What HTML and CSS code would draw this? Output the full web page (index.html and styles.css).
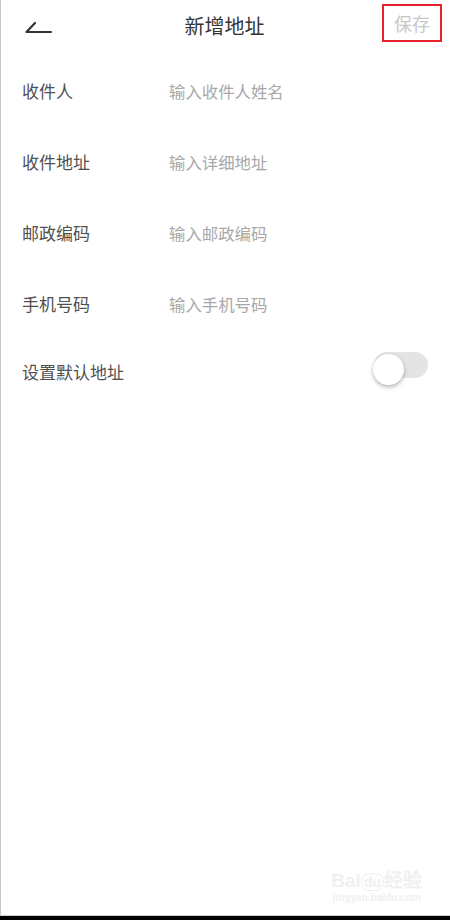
FILE: index.html
```html
<!DOCTYPE html>
<html lang="zh-CN">
<head>
<meta charset="UTF-8">
<meta name="viewport" content="width=device-width, initial-scale=1.0">
<title>新增地址</title>
<link rel="stylesheet" href="styles.css">
</head>
<body>
<div class="page">
    <header class="topbar">
        <div class="back">
            <svg width="30" height="16" viewBox="0 0 30 16">
                <path d="M12 2 L3.5 11 L28 11" fill="none" stroke="#333" stroke-width="2.2" stroke-linecap="round" stroke-linejoin="round"/>
            </svg>
        </div>
        <h1 class="title">新增地址</h1>
        <div class="save">保存</div>
    </header>

    <div class="form">
        <div class="row">
            <span class="label">收件人</span>
            <span class="input">输入收件人姓名</span>
        </div>
        <div class="row">
            <span class="label">收件地址</span>
            <span class="input">输入详细地址</span>
        </div>
        <div class="row">
            <span class="label">邮政编码</span>
            <span class="input">输入邮政编码</span>
        </div>
        <div class="row">
            <span class="label">手机号码</span>
            <span class="input">输入手机号码</span>
        </div>
        <div class="row row-switch">
            <span class="label">设置默认地址</span>
            <div class="switch">
                <div class="knob"></div>
            </div>
        </div>
    </div>

    <div class="watermark">
        <div class="wm-logo">Bai<span class="wm-du">du</span>经验</div>
        <div class="wm-url">jingyan.baidu.com</div>
    </div>
</div>
<div class="bottom-bar"></div>
</body>
</html>
```

FILE: styles.css
```css
html, body {
    margin: 0;
    padding: 0;
}

body {
    width: 450px;
    height: 920px;
    background-color: #fff;
    font-family: "Noto Sans CJK SC", "Noto Sans", sans-serif;
    display: flex;
    flex-direction: column;
    overflow: hidden;
}

.page {
    flex: 1;
    border-left: 1px solid #c4c8cc;
    display: flex;
    flex-direction: column;
}

.topbar {
    height: 52px;
    display: grid;
    grid-template-columns: 1fr auto 1fr;
    align-items: center;
    padding: 0 8px 0 22px;
}

.back {
    display: flex;
    align-items: center;
    padding-top: 6px;
}

.title {
    margin: 0;
    font-size: 20px;
    font-weight: normal;
    color: #333;
    padding-right: 16px;
    padding-bottom: 2px;
}

.save {
    justify-self: end;
    width: 56px;
    height: 34px;
    border: 2px solid #e8232c;
    color: #c8c8c8;
    font-size: 18px;
    display: flex;
    align-items: center;
    justify-content: center;
    margin-bottom: 6px;
}

.form {
    display: flex;
    flex-direction: column;
    padding-top: 3px;
}

.row {
    height: 71px;
    display: flex;
    align-items: center;
    padding: 0 22px 0 21px;
}

.row-switch {
    height: 64px;
    justify-content: space-between;
    padding-right: 22px;
}

.label {
    width: 147px;
    font-size: 17px;
    color: #505050;
}

.input {
    font-size: 16.4px;
    color: #a8a8a8;
}

.switch {
    position: relative;
    width: 54px;
    height: 26px;
    border-radius: 13px;
    background-color: #e4e4e4;
    margin-top: -12px;
}

.knob {
    position: absolute;
    left: -1px;
    top: 2px;
    width: 31px;
    height: 31px;
    border-radius: 50%;
    background-color: #fff;
    box-shadow: 0 2px 4px rgba(0, 0, 0, 0.3);
}

.watermark {
    margin-top: auto;
    margin-bottom: 12px;
    align-self: flex-end;
    margin-right: 28px;
    text-align: center;
    color: #f0f0f0;
    font-family: "Liberation Sans", Arial, sans-serif;
}

.wm-logo {
    font-size: 19px;
    font-weight: bold;
}

.wm-du {
    display: inline-block;
    border: 1px solid #f0f0f0;
    border-radius: 8px;
    padding: 0 2px;
    font-size: 14px;
}

.wm-url {
    font-size: 10px;
    font-weight: bold;
}

.bottom-bar {
    height: 4px;
    border-top: 1px solid #d0d0d0;
    background-color: #000;
}
```
